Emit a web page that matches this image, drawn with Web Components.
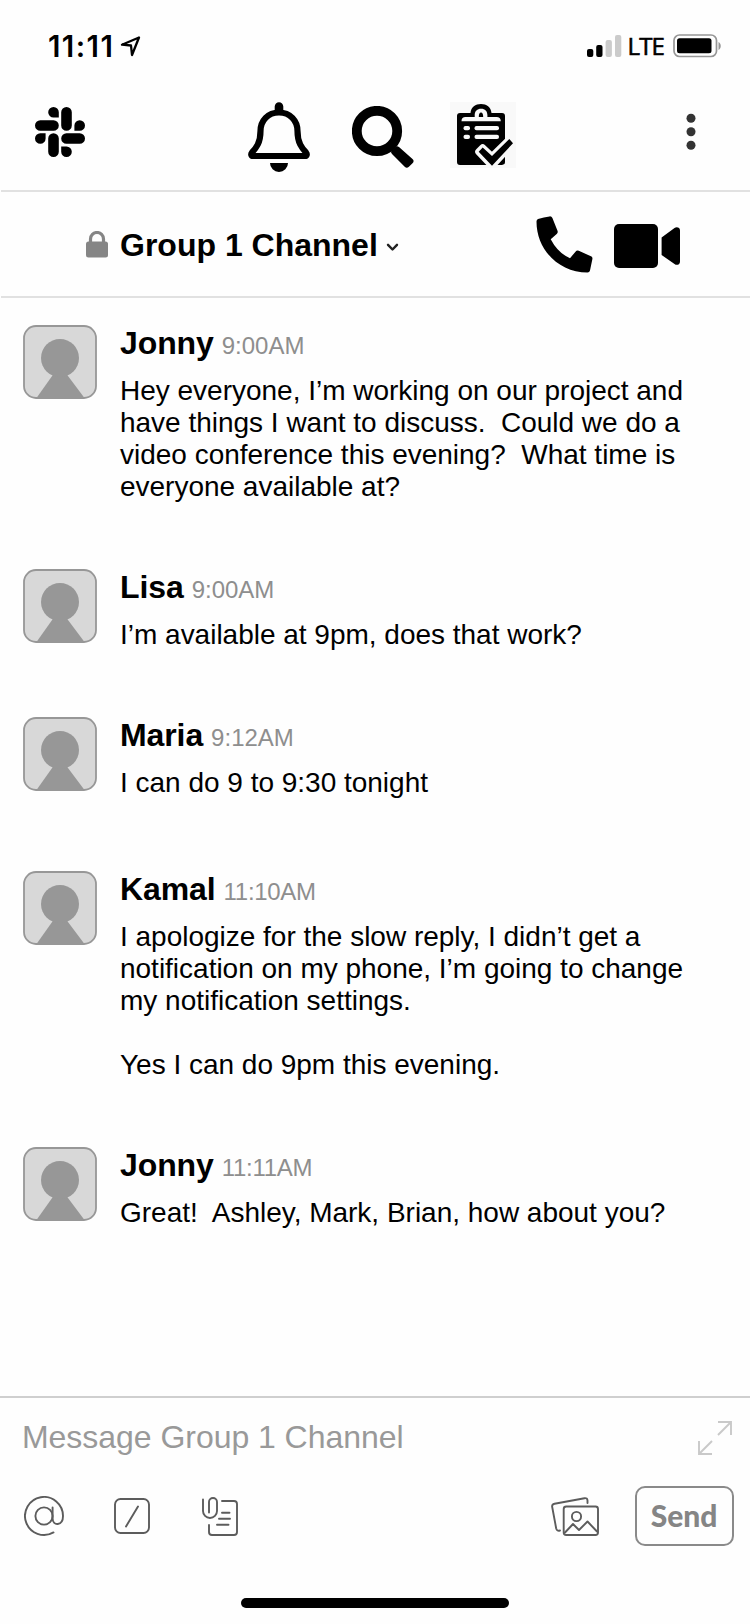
<!DOCTYPE html>
<html lang="en">
<head>
<meta charset="utf-8">
<title>Group 1 Channel</title>
<style>
html,body{margin:0;padding:0;background:#fefefe}
body{font-family:"Liberation Sans",Arial,sans-serif;color:#000}
</style>
</head>
<body>
<chat-app></chat-app>
<script>
const define = (name, html) => {
  const t = document.createElement('template');
  t.innerHTML = html;
  customElements.define(name, class extends HTMLElement {
    constructor() {
      super();
      this.attachShadow({mode: 'open'}).appendChild(t.content.cloneNode(true));
    }
  });
};

define('status-bar', `
<style>
:host{display:flex;align-items:center;height:92px;box-sizing:border-box;padding:0 29px 0 48px}
.time{font:600 29.5px/36px Inter,sans-serif;letter-spacing:1.4px;width:72px;white-space:nowrap}
svg{display:block;flex:none}
.sp{flex:1}
.lte{font:24px/34px "Open Sans","Noto Sans",sans-serif;margin:0 9px 0 7px;letter-spacing:-.9px;-webkit-text-stroke:.6px #000}
</style>
<span class="time">11:11</span>
<svg width="21" height="21" viewBox="0 0 21 21" fill="none" stroke="#000" stroke-width="2.300" stroke-linejoin="round"><path d="M19 1.500 2 8.700 11 9.500 12 19Z"/></svg>
<span class="sp"></span>
<svg width="35" height="22" viewBox="0 0 35 22" style="margin-right:-1px"><rect x="0" y="14" width="6.3" height="8" rx="2"/><rect x="9.2" y="10" width="6.3" height="12" rx="2"/><g fill="#cbcbcb"><rect x="18.6" y="5" width="6.3" height="17" rx="2"/><rect x="28" y="0" width="6.3" height="22" rx="2"/></g></svg>
<span class="lte">LTE</span>
<svg width="48" height="24" viewBox="0 0 48 24"><rect x="1" y="1" width="42.500" height="21.500" rx="5.500" fill="none" stroke="#969696" stroke-width="1.700"/><rect x="4" y="4.300" width="34.500" height="15" rx="2.500"/><path d="M45.500 8v8c3-1.600 3-6.400 0-8z" fill="#969696"/></svg>
`);

define('app-toolbar', `
<style>
:host{display:grid;grid-template-columns:35px 52px 161px 62px 42px 62px 36px 66px 171px 9px;height:98px;margin-left:1px;grid-template-rows:100%;border-bottom:2px solid #e1e1e1}
svg{display:block}
</style>
<i></i>
<svg width="50" height="50" viewBox="0 0 50 50" style="margin:15px 0 0 -1px"><path d="M18.500 0a5.300 5.300 0 1 0 0 10.600h5.300V5.300A5.300 5.300 0 0 0 18.500 0zM5.300 13.200h13.200a5.300 5.300 0 0 1 0 10.600H5.300a5.300 5.300 0 0 1 0-10.600zM26.200 5.300a5.300 5.300 0 0 1 10.600 0v13.200a5.300 5.300 0 0 1-10.600 0zM50 18.500a5.300 5.300 0 1 0-10.600 0v5.300h5.300A5.300 5.300 0 0 0 50 18.500zM31.500 26.200h13.200a5.300 5.300 0 0 1 0 10.600H31.500a5.300 5.300 0 0 1 0-10.600zM31.500 50a5.300 5.300 0 1 0 0-10.600h-5.300v5.300A5.300 5.300 0 0 0 31.500 50zM13.200 31.500a5.300 5.300 0 0 1 10.600 0v13.200a5.300 5.300 0 0 1-10.600 0zM0 31.500a5.300 5.300 0 1 0 10.600 0v-5.300H5.300A5.300 5.300 0 0 0 0 31.500z"/></svg>
<i></i>
<svg width="62" height="70" viewBox="0 0 62 70" style="margin-top:10px;margin-left:-1px"><path d="M31 10.500C20 10.500 12.500 18.500 12.500 29c0 12-4.500 17-8.500 21.500-1.500 2-.5 3.500 1 3.500h52c1.500 0 2.500-1.500 1-3.500C54 46 49.500 41 49.500 29c0-10.500-7.500-18.500-18.500-18.500Z" fill="none" stroke="#000" stroke-width="6.200" stroke-linejoin="round"/><path d="M26.700 9V4.500a4.300 4.300 0 0 1 8.600 0V9zM22 61h18a9 9 0 0 1-18 0z"/></svg>
<i></i>
<svg width="63" height="63" viewBox="0 0 63 63" style="margin:14px 0 0 -1px"><circle cx="25" cy="25" r="20.200" fill="none" stroke="#000" stroke-width="9.800"/><path d="M43 41.500q1.500-2.200 4-.6L60.500 53q2.200 2.100 0 4.200l-3.600 3.600q-2.100 2-4.200 0L40 48q-1.500-1.600-.7-3.300z"/></svg>
<i></i>
<svg width="66" height="66" viewBox="0 0 66 66" style="margin:10px 0 0 -1px"><path fill="#f9f9f9" d="M0 0h66v66H0z"/><path d="M10 11h10.500C21 5 25.500 2 31 2s10 3 10.500 9H52a3 3 0 0 1 3 3v46a3 3 0 0 1-3 3H10a3 3 0 0 1-3-3V14a3 3 0 0 1 3-3z"/><path d="M11.500 19.300c0-3 1.500-4.300 4-4.300h9.200V13c0-4 2.500-6.300 6.400-6.300s6.300 2.300 6.300 6.300v2h9.200c2.500 0 4.200 1.300 4.200 4.300z" fill="#f9f9f9"/><path d="M31 10.500c1.500 0 2.200 1.500 2.200 4.500h-4.400c0-3 .7-4.500 2.200-4.500z"/><g fill="#f9f9f9"><rect x="13.500" y="24" width="6.500" height="4.300" rx="2"/><rect x="24.500" y="24" width="24.500" height="4.300" rx="2"/><rect x="13.500" y="32.700" width="6.500" height="4.300" rx="2"/><rect x="24.500" y="32.700" width="24.500" height="4.300" rx="2"/></g><path d="M28.700 49.800 32.700 45.800 42 54.500 59.300 37.500 63 41.200 42 63.800z" fill="#f9f9f9" stroke="#f9f9f9" stroke-width="7" stroke-linejoin="round"/><path d="M56 62h10v4H40z" fill="#f9f9f9"/><path d="M28.700 49.800 32.700 45.400 42 54 59.300 37 63 41.200 42 63.800z"/></svg>
<i></i>
<svg width="10" height="38" viewBox="0 0 10 38" style="margin-top:21px;margin-left:-2px" fill="#333"><circle cx="5" cy="5.300" r="4.500"/><circle cx="5" cy="18.800" r="4.500"/><circle cx="5" cy="32.300" r="4.500"/></svg>
`);

define('channel-header', `
<style>
:host{display:flex;align-items:center;margin-left:1px;padding:0 70px 2px 85px;border-bottom:2px solid #e1e1e1;box-sizing:border-box;height:106px}
svg{display:block;flex:none}
h1{margin:3px 0 0 12px;font-size:32px;line-height:36px;font-weight:700;white-space:nowrap}
.sp{flex:1}
</style>
<svg width="22" height="27" viewBox="0 0 22 27" style="margin-top:2px"><rect y="10.500" width="22" height="16" rx="2.500" fill="#858585"/><path d="M4.500 12V8a6.500 6.500 0 0 1 13 0v4" fill="none" stroke="#858585" stroke-width="3.200"/></svg>
<h1><slot></slot></h1>
<svg width="13" height="9" viewBox="0 0 13 9" style="margin:9px 0 0 8px" fill="none" stroke="#222" stroke-width="2.400" stroke-linecap="round" stroke-linejoin="round"><path d="m2 1.800 4.500 4.700L11 1.800"/></svg>
<span class="sp"></span>
<svg width="57" height="57" viewBox="0 0 57 57" style="margin-top:2px"><path d="M2 3Q8 1.200 13.500.4q2-.3 2.900 1.600l5.100 12.800q.7 1.900-.8 3.200l-6 5.200Q22 37 34 42.200l5.500-6.500q1.300-1.700 3.300-.9L55 40.300q1.800.8 1.400 2.800L54 54.500q-.5 2-2.500 2C23 56.500.5 34 .5 5.500Q.5 3.500 2 3z"/></svg>
<svg width="66" height="44" viewBox="0 0 66 44" style="margin:5px 0 0 21px"><rect width="44" height="44" rx="5"/><path d="M47.600 13.500 60.500 4c2.500-1.500 5.500-.3 5.500 2.500v31c0 3-3 4.400-5.500 2.500l-12.900-9z"/></svg>
`);

define('user-avatar', `
<style>:host{display:block;width:74px;height:74px}svg{display:block}</style>
<svg width="74" height="74" viewBox="0 0 74 74"><rect x="1" y="1" width="72" height="72" rx="12" fill="#d8d8d8"/><path fill="#979797" d="M30.500 49h13L61.500 73h-48z"/><circle cx="37" cy="33" r="19" fill="#979797"/><rect x="1" y="1" width="72" height="72" rx="12" fill="none" stroke="#979797" stroke-width="1.800"/></svg>
`);

define('chat-message', `
<style>
:host{display:grid;grid-template-columns:74px 1fr;column-gap:23px}
header{height:36px;line-height:36px;font-size:32px;font-weight:700;white-space:nowrap;letter-spacing:-.1px}
.when{font-size:24px;font-weight:400;color:#8e8e8e;margin-left:8px;letter-spacing:var(--time-spacing,0)}
.body{margin-top:14px;margin-bottom:-1px;font-size:28px;line-height:32px;white-space:pre;letter-spacing:-.01px}
</style>
<user-avatar></user-avatar>
<div><header><slot name="name"></slot><span class="when"><slot name="time"></slot></span></header><div class="body"><slot></slot></div></div>
`);

define('message-list', `
<style>
:host{display:flex;flex-direction:column;gap:67px;padding:27px 23px 0;height:1098px;box-sizing:border-box}
</style><slot></slot>
`);

define('send-button', `
<style>
:host{display:flex;align-items:center;justify-content:center;box-sizing:border-box;width:99px;height:60px;border:2px solid #8a8a8a;border-radius:10px;padding:0 1px 2px 0;font:900 30px/36px Lato,sans-serif;color:#858585}
</style><slot></slot>
`);

define('message-composer', `
<style>
:host{display:block;height:228px;box-sizing:border-box;border-top:2px solid #cfcfcf}
.row{display:flex;align-items:center}
.input{height:80px;padding:0 18px 0 22px;justify-content:space-between}
.ph{font-size:32px;line-height:36px;color:#999;white-space:nowrap;margin-top:-2px;letter-spacing:-.04px}
.tools{height:76px;padding:0 16px 0 24px}
svg{display:block;flex:none;fill:none;stroke:#5c5c5c;stroke-width:1.900;stroke-linecap:round;stroke-linejoin:round}
.sp{flex:1}
.home{width:268px;height:10px;border-radius:5px;background:#000;margin:44px auto 0}
</style>
<div class="row input"><span class="ph"><slot></slot></span>
<svg width="34" height="34" viewBox="0 0 34 34" style="stroke:#c9c9c9;stroke-width:1.900;stroke-linecap:butt;stroke-linejoin:miter"><path d="M20 1h13v13M33 1 20 14M14 33H1V20M1 33l13-13"/></svg></div>
<div class="row tools">
<svg width="40" height="40" viewBox="0 0 40 40"><circle cx="20" cy="20" r="8.600"/><path d="M28.600 11.500v11c0 8 10.400 7.500 10.400-2.500A19 19 0 1 0 29.500 36.400"/></svg>
<svg width="36" height="36" viewBox="0 0 36 36" style="margin-left:50px"><rect x="1" y="1" width="34" height="34" rx="5.500"/><path d="m24 8.500-12 20"/></svg>
<svg width="36" height="40" viewBox="0 0 36 40" style="margin-left:52px"><path d="M1 3.500V15a7 7 0 0 0 14 0V6a4 4 0 0 0-8 0v10.500M20 5h12a3 3 0 0 1 3 3v28a3 3 0 0 1-3 3H10a3 3 0 0 1-3-3v-7M20 16.800h7.500M17 22.800h11M15 28.800h11.500"/></svg>
<span class="sp"></span>
<svg width="48" height="39" viewBox="0 0 48 39" style="margin-right:36px"><rect x="12.700" y="9.500" width="34.300" height="28.500" rx="2.500"/><path d="M36.500 6V3.500Q36.300.8 33.500 1.200L3.500 6.700Q.7 7.300 1.200 10L5.200 31.500Q6 34.500 9 33.500M14 35.500l8-8.500 6 6L36.500 24.500 46 34.500"/><circle cx="25.500" cy="19.500" r="4.600"/></svg>
<send-button>Send</send-button>
</div>
<div class="home"></div>
`);

define('chat-app', `
<style>:host{display:flex;flex-direction:column;width:750px;height:1624px;overflow:hidden;background:#fefefe}</style>
<status-bar></status-bar>
<app-toolbar></app-toolbar>
<channel-header>Group 1 Channel</channel-header>
<message-list>
<chat-message><span slot="name">Jonny</span><span slot="time">9:00AM</span>Hey everyone, I’m working on our project and
have things I want to discuss.  Could we do a
video conference this evening?  What time is
everyone available at?</chat-message>
<chat-message><span slot="name">Lisa</span><span slot="time">9:00AM</span>I’m available at 9pm, does that work?</chat-message>
<chat-message style="margin-bottom:6px"><span slot="name">Maria</span><span slot="time">9:12AM</span>I can do 9 to 9:30 tonight</chat-message>
<chat-message style="--time-spacing:-.3px"><span slot="name">Kamal</span><span slot="time">11:10AM</span>I apologize for the slow reply, I didn’t get a
notification on my phone, I’m going to change
my notification settings.

Yes I can do 9pm this evening.</chat-message>
<chat-message style="--time-spacing:-.3px"><span slot="name">Jonny</span><span slot="time">11:11AM</span>Great!  Ashley, Mark, Brian, how about you?</chat-message>
</message-list>
<message-composer>Message Group 1 Channel</message-composer>
`);
</script>
</body>
</html>
